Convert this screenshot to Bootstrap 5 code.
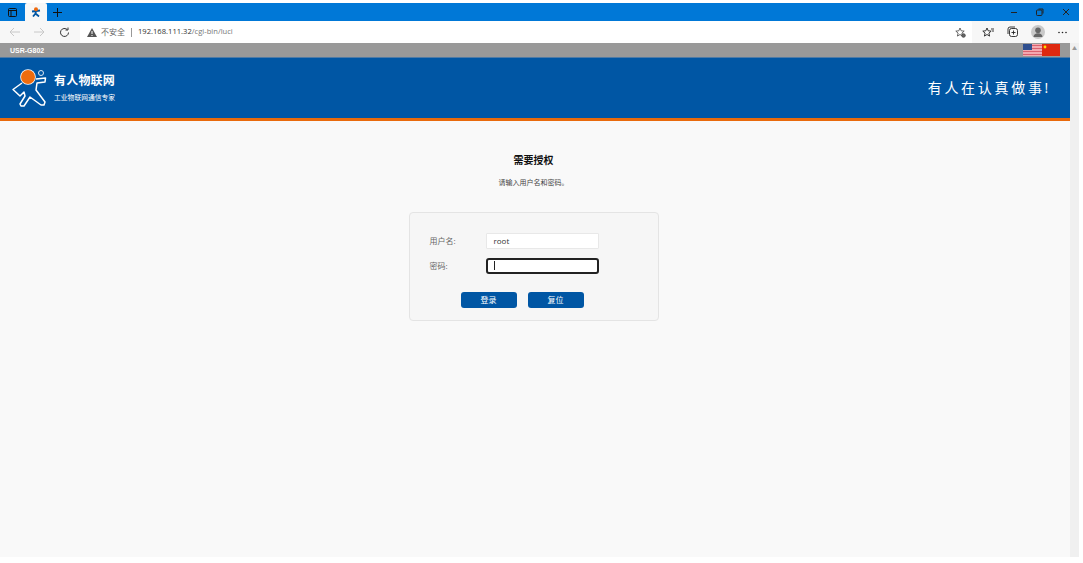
<!DOCTYPE html>
<html lang="zh">
<head>
    <meta charset="UTF-8">
    <title>需要授权</title>
    <link href="https://cdn.jsdelivr.net/npm/bootstrap@5.3.0/dist/css/bootstrap.min.css" rel="stylesheet">
    <style>
        html, body{
            height:100%;
            overflow:hidden;
        }
        body{
            background:#fff;
            font-family:"Open Sans","Noto Sans CJK SC",sans-serif;
            padding:3px 4px 6px 0;
        }
        .shell{
            height:100%;
        }
        .tab-strip{
            height:18px;
            background:#0078d7;
        }
        .tab-switch{
            width:25px;
        }
        .tab-now{
            width:22px;
            height:100%;
            background:#f7f7f7;
            border-radius:2px 2px 0 0;
        }
        .tab-new{
            width:20px;
        }
        .win-cell{
            width:26px;
        }
        .tool-strip{
            height:22px;
            background:#f7f7f7;
        }
        .nav-btns{
            padding-left:2px;
        }
        .ico-cell{
            width:25px;
        }
        .url-box{
            height:100%;
            margin-left:3px;
            margin-right:3px;
            padding:0 6px 0 7px;
            background:#fff;
            border-radius:2px 2px 0 0;
            font-size:7.6px;
            color:#333;
        }
        .url-warn{
            color:#666;
            font-size:8px;
            margin-left:4px;
        }
        .url-sep{
            width:1px;
            height:9px;
            background:#999;
            margin:0 6px;
        }
        .url-dim{
            color:#777;
        }
        .tool-icons{
            padding-right:4px;
        }
        .page-area{
            min-height:0;
        }
        .page-main{
            min-width:0;
            background:#f9f9f9;
        }
        .scroll-rail{
            width:9px;
            background:#f0f0f0;
        }
        .rail-arrow{
            color:#999;
            font-size:5px;
            line-height:1;
            padding-top:3px;
        }
        .model-bar{
            height:14px;
            background:#999;
            padding:2px 10px 0;
            font-family:"Liberation Sans",sans-serif;
            font-size:7px;
            font-weight:700;
            color:#fff;
        }
        .flag-pair{
            width:37px;
            height:12px;
            margin-top:-2px;
        }
        .brand-bar{
            height:64px;
            background:#0056a4;
            border-top:1px solid #4f7ba6;
            border-bottom:3px solid #e96a0c;
            padding:0 19px 0 11px;
            color:#fff;
        }
        .brand-name{
            font-size:12px;
            font-weight:700;
            line-height:14px;
            letter-spacing:.2px;
        }
        .brand-sub{
            font-size:6.8px;
            line-height:9px;
            margin-top:5px;
            padding-bottom:1px;
        }
        .brand-logo{
            margin-right:7px;
        }
        .brand-slogan{
            font-size:14px;
            letter-spacing:2.7px;
            padding-bottom:1px;
        }
        .auth-wrap{
            padding-right:3px;
        }
        .auth-title{
            margin:32px 0 0;
            font-size:10px;
            line-height:14px;
            font-weight:700;
            color:#111;
        }
        .auth-hint{
            margin:10px 0 0;
            font-size:7px;
            line-height:12px;
            color:#444;
        }
        .auth-panel{
            width:250px;
            height:109px;
            margin-top:23px;
            padding:15px 20px 0;
            background:#f6f6f6;
            border:1px solid #e4e4e4;
            border-radius:4px;
            font-size:8px;
            color:#666;
        }
        .auth-line{
            height:25px;
        }
        .auth-label{
            width:56px;
        }
        .auth-input{
            width:113px;
            height:16px;
            padding:0 7px;
            background:#fff;
            border:1px solid #e8e8e8;
            border-radius:1px;
            font-size:8px;
            color:#333;
        }
        .auth-input-on{
            border:2px solid #222;
            border-radius:3px;
            padding:0 6px;
        }
        .auth-caret{
            width:1px;
            height:9px;
            background:#222;
        }
        .auth-btns{
            gap:11px;
            margin-top:14px;
            padding-left:31px;
        }
        .auth-btn{
            width:56px;
            height:16px;
            padding:0;
            background:#0056a4;
            border:0;
            border-radius:3px;
            font-size:8px;
            line-height:16px;
            color:#fff;
        }
    </style>
</head>
<body>
    <div class="shell d-flex flex-column">
        <div class="tab-strip d-flex align-items-center flex-shrink-0">
            <div class="tab-switch d-flex justify-content-center">
                <svg width="9" height="9" viewBox="0 0 9 9" fill="none" stroke="#111"><rect x=".5" y=".5" width="8" height="8" rx="1"/><path d="M.5 2.500h8M3 2.500v6"/></svg>
            </div>
            <div class="tab-now d-flex align-items-center justify-content-center">
                <svg width="10" height="10" viewBox="0 0 10 10"><path d="M1 4.500 5 4l4-.5M5 4 4.500 6.500 2 9.500M4.500 6.500 8 9.500" fill="none" stroke="#0056a4" stroke-width="1.800"/><circle cx="5" cy="2.200" r="2" fill="#ee6a10"/></svg>
            </div>
            <div class="tab-new d-flex justify-content-center">
                <svg width="9" height="9" viewBox="0 0 9 9" stroke="#111"><path d="M4.500 0v9M0 4.500h9"/></svg>
            </div>
            <div class="ms-auto d-flex align-items-center">
                <div class="win-cell d-flex justify-content-center">
                    <svg width="8" height="8" viewBox="0 0 8 8" stroke="#222"><path d="M1 4.500h6"/></svg>
                </div>
                <div class="win-cell d-flex justify-content-center">
                    <svg width="8" height="8" viewBox="0 0 8 8" fill="none" stroke="#222"><rect x=".5" y="2" width="5.500" height="5.500" rx="1"/><path d="M2.500 1H7v4.500"/></svg>
                </div>
                <div class="win-cell d-flex justify-content-center">
                    <svg width="8" height="8" viewBox="0 0 8 8" stroke="#222"><path d="M1 1l6 6M7 1 1 7"/></svg>
                </div>
            </div>
        </div>
        <div class="tool-strip d-flex align-items-center flex-shrink-0">
            <div class="nav-btns d-flex align-items-center">
                <div class="ico-cell d-flex justify-content-center">
                    <svg width="11" height="10" viewBox="0 0 11 10" fill="none" stroke="#c8c8c8"><path d="M11 5H1M5 1 1 5l4 4"/></svg>
                </div>
                <div class="ico-cell d-flex justify-content-center">
                    <svg width="11" height="10" viewBox="0 0 11 10" fill="none" stroke="#c8c8c8"><path d="M0 5h10M6 1l4 4-4 4"/></svg>
                </div>
                <div class="ico-cell d-flex justify-content-center">
                    <svg width="11" height="11" viewBox="0 0 11 11" fill="none" stroke="#333"><path d="M9.500 5.500a4 4 0 1 1-1.200-2.900M9 .5v2.500H6.500"/></svg>
                </div>
            </div>
            <div class="url-box flex-grow-1 d-flex align-items-center">
                <svg width="10" height="9" viewBox="0 0 10 9"><path d="M5 0 10 9H0z" fill="#555"/><path d="M5 3v3M5 7v1" stroke="#fff"/></svg>
                <span class="url-warn">不安全</span>
                <span class="url-sep"></span>
                <span>192.168.111.32<span class="url-dim">/cgi-bin/luci</span></span>
                <svg class="ms-auto" width="11" height="11" viewBox="0 0 11 11" fill="none" stroke="#444" stroke-width=".8"><path d="M5 1l1.200 2.800 3 .3-2.300 2 .7 3L5 7.500 2.400 9.100l.7-3-2.300-2 3-.3z"/><circle cx="8.500" cy="8.500" r="1.800" fill="#666"/></svg>
            </div>
            <div class="tool-icons d-flex align-items-center">
                <div class="ico-cell d-flex justify-content-center">
                    <svg width="12" height="11" viewBox="0 0 12 11" fill="none" stroke="#222" stroke-width=".9"><path d="M5 1l1.200 2.800 3 .3-2.300 2 .7 3L5 7.500 2.400 9.100l.7-3-2.300-2 3-.3zM9 2h3M10 4h2"/></svg>
                </div>
                <div class="ico-cell d-flex justify-content-center">
                    <svg width="12" height="12" viewBox="0 0 12 12" fill="none" stroke="#222" stroke-width=".9"><rect x="2.500" y="2.500" width="8" height="8" rx="2"/><path d="M1 8V3a2 2 0 0 1 2-2h5M6.500 4.500v4M4.500 6.500h4"/></svg>
                </div>
                <div class="ico-cell d-flex justify-content-center">
                    <svg width="14" height="14" viewBox="0 0 14 14"><circle cx="7" cy="7" r="7" fill="#c9c9c9"/><circle cx="7" cy="5.200" r="2.800" fill="#666"/><path d="M2.500 12a4.500 3.800 0 0 1 9 0z" fill="#666"/></svg>
                </div>
                <div class="ico-cell d-flex justify-content-center">
                    <svg width="9" height="9" viewBox="0 0 9 9" fill="#222"><circle cx="1" cy="4.500" r=".8"/><circle cx="4.500" cy="4.500" r=".8"/><circle cx="8" cy="4.500" r=".8"/></svg>
                </div>
            </div>
        </div>
        <div class="page-area d-flex flex-grow-1">
            <div class="page-main flex-grow-1 d-flex flex-column">
                <div class="model-bar d-flex align-items-center justify-content-between flex-shrink-0">
                    <span>USR-G802</span>
                    <svg class="flag-pair" viewBox="0 0 37 12">
                        <rect width="19" height="12" fill="#f2a9b0"/>
                        <path d="M0 1.500h19M0 4.500h19M0 7.500h19M0 10.500h19" stroke="#d9606e"/>
                        <rect width="9" height="6" fill="#2f4f8f"/>
                        <rect x="19" width="18" height="12" fill="#de2910"/>
                        <circle cx="22" cy="3" r="1.400" fill="#ffde00"/>
                    </svg>
                </div>
                <div class="brand-bar d-flex align-items-center justify-content-between flex-shrink-0">
                    <div class="d-flex align-items-center">
                        <svg class="brand-logo" width="36" height="40" viewBox="0 0 36 40">
                            <path d="M11 15 2 21.500 9 28l4-4 1 4-5 8 1 2h3l6-9 11 8h3l1-3-9-12 1-7 8-1 .5-4-9.500 1" fill="none" stroke="#fff" stroke-width="1.500" stroke-linejoin="round"/>
                            <circle cx="17" cy="9" r="7.800" fill="#fff"/>
                            <circle cx="17" cy="9" r="7" fill="#ef6c0e"/>
                            <circle cx="30" cy="5" r="2.500" fill="none" stroke="#dfe8f2"/>
                        </svg>
                        <div>
                            <div class="brand-name">有人物联网</div>
                            <div class="brand-sub">工业物联网通信专家</div>
                        </div>
                    </div>
                    <div class="brand-slogan">有人在认真做事!</div>
                </div>
                <div class="auth-wrap d-flex flex-column align-items-center text-center">
                    <h2 class="auth-title">需要授权</h2>
                    <p class="auth-hint">请输入用户名和密码。</p>
                    <div class="auth-panel">
                        <div class="auth-line d-flex align-items-center">
                            <span class="auth-label text-start">用户名:</span>
                            <div class="auth-input d-flex align-items-center">root</div>
                        </div>
                        <div class="auth-line d-flex align-items-center">
                            <span class="auth-label text-start">密码:</span>
                            <div class="auth-input auth-input-on d-flex align-items-center"><span class="auth-caret"></span></div>
                        </div>
                        <div class="auth-btns d-flex">
                            <button class="auth-btn btn">登录</button>
                            <button class="auth-btn btn">复位</button>
                        </div>
                    </div>
                </div>
            </div>
            <div class="scroll-rail text-center flex-shrink-0">
                <div class="rail-arrow">▲</div>
            </div>
        </div>
    </div>
    <script src="https://cdn.jsdelivr.net/npm/bootstrap@5.3.0/dist/js/bootstrap.bundle.min.js"></script>
</body>
</html>
